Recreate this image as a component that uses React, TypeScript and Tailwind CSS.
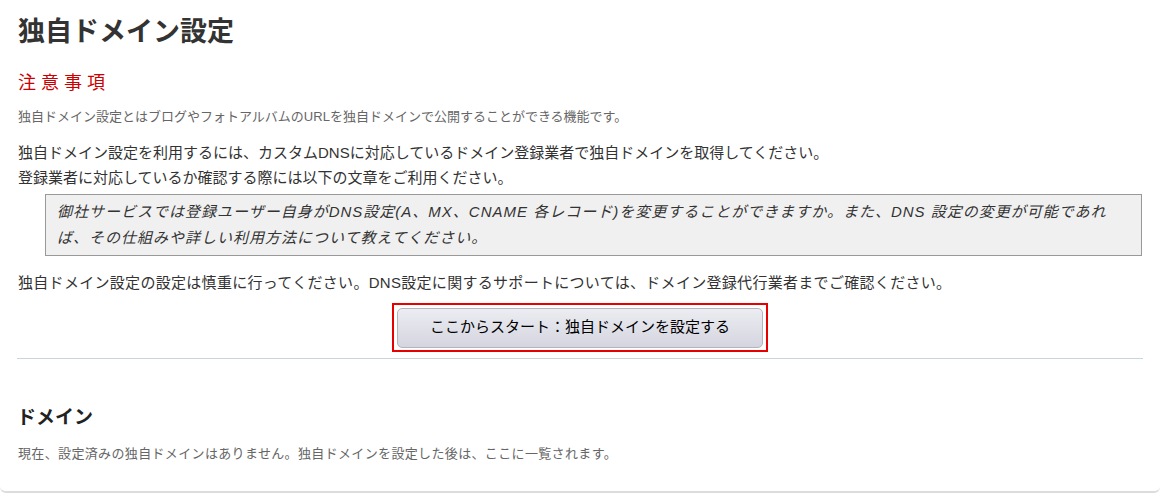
export default function App() {
  return (
    <div className="w-[1160px] h-[493px] bg-white font-['Liberation_Sans','Noto_Sans_CJK_JP',sans-serif] text-[#333]">
      <div className="h-[493px] rounded-md border-b-2 border-[#dcdcdc] px-[17px] pt-[16px]">
        {/* Page title */}
        <h1 className="text-[27px] leading-[32px] font-bold text-[#333] pl-px">独自ドメイン設定</h1>

        {/* Notes */}
        <h2 className="mt-[23px] pl-px text-[18px] leading-[24px] tracking-[5px] text-[#cc0000]">注意事項</h2>
        <p className="mt-[12px] pl-px text-[13px] leading-[20px] text-[#666]">
          独自ドメイン設定とはブログやフォトアルバムのURLを独自ドメインで公開することができる機能です。
        </p>
        <p className="mt-[13px] pl-px text-[15px] leading-[25px]">
          独自ドメイン設定を利用するには、カスタムDNSに対応しているドメイン登録業者で独自ドメインを取得してください。
          <br />
          登録業者に対応しているか確認する際には以下の文章をご利用ください。
        </p>
        <blockquote className="mt-[4px] ml-[28px] mr-px border border-[#999] bg-[#f0f0f0] px-[11px] py-[4px] text-[15px] leading-[26px] italic tracking-[1px]">
          御社サービスでは登録ユーザー自身がDNS設定(A、MX、CNAME 各レコード)を変更することができますか。また、DNS 設定の変更が可能であれ
          <br />
          ば、その仕組みや詳しい利用方法について教えてください。
        </blockquote>
        <p className="mt-[14px] pl-px text-[15px] leading-[25px] tracking-[0.3px]">
          独自ドメイン設定の設定は慎重に行ってください。DNS設定に関するサポートについては、ドメイン登録代行業者までご確認ください。
        </p>

        {/* Start button */}
        <div className="mt-[8px] mx-auto w-[376px] h-[49px] border-2 border-[#e60000] flex items-center justify-center">
          <button className="w-[366px] h-[40px] rounded-[5px] border border-[#b4b4bc] bg-gradient-to-b from-[#ececf2] to-[#d5d5e0] text-[15px] text-black">
            ここからスタート：独自ドメインを設定する
          </button>
        </div>

        <div className="mt-[6px] h-px bg-[#c9d5dd]" />

        {/* Domain list */}
        <h2 className="mt-[46px] text-[19px] leading-[26px] font-bold text-[#222]">ドメイン</h2>
        <p className="mt-[13px] pl-px text-[13px] leading-[20px] tracking-[0.35px] text-[#666]">
          現在、設定済みの独自ドメインはありません。独自ドメインを設定した後は、ここに一覧されます。
        </p>
      </div>
    </div>
  );
}
